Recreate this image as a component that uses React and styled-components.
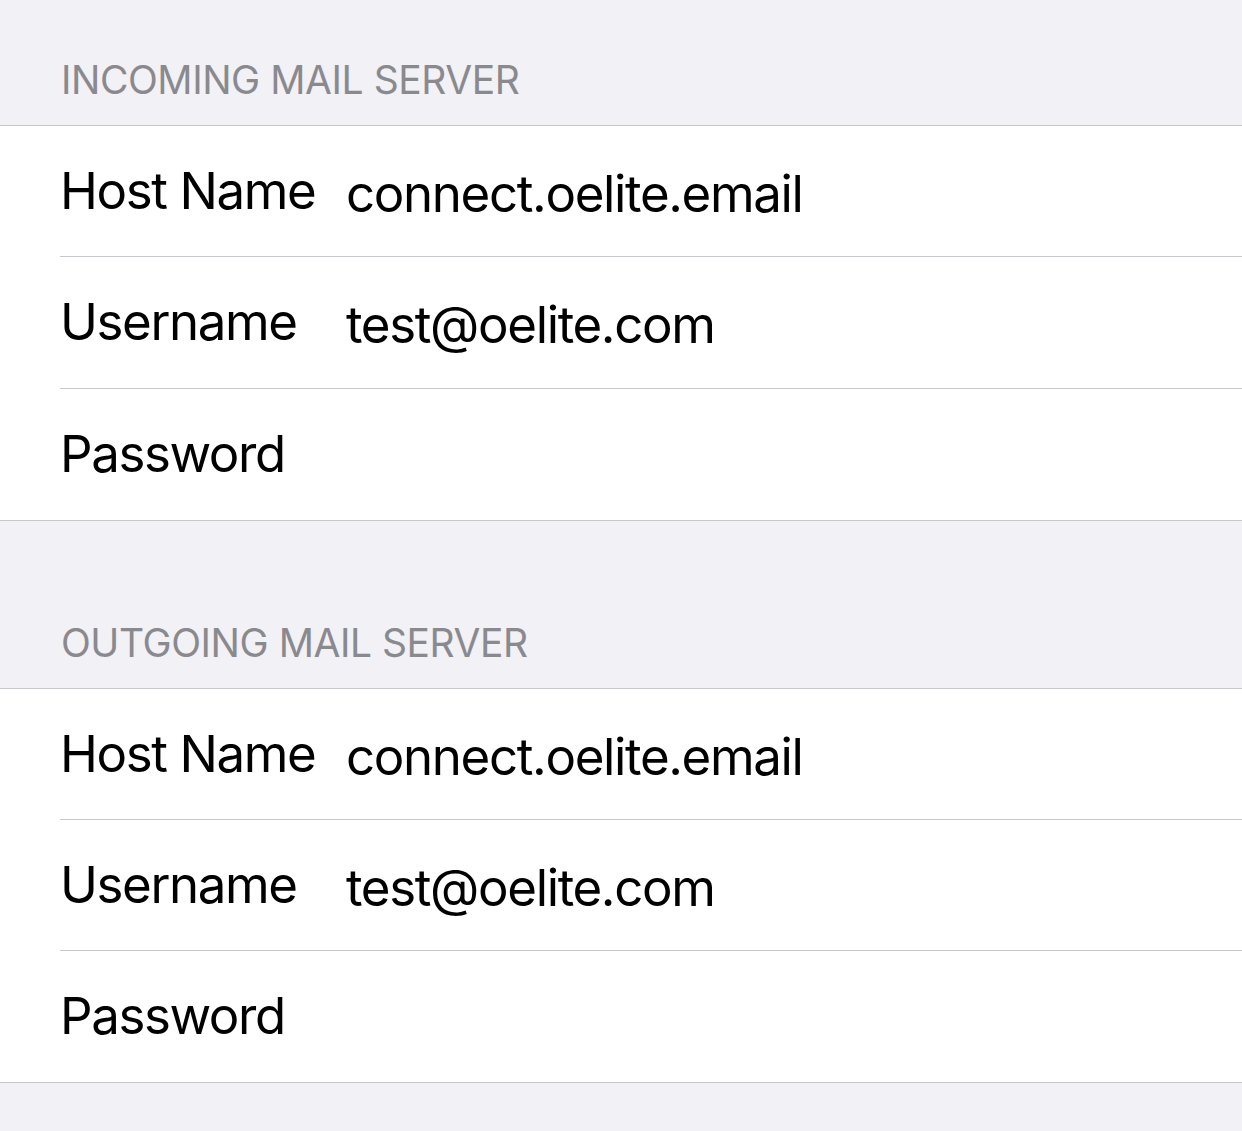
import React from "react";
import styled, { createGlobalStyle } from "styled-components";

const Global = createGlobalStyle`
  html, body { margin: 0; padding: 0; background: #f1f1f6; }
  body { font-family: Inter, "Noto Sans", sans-serif; -webkit-font-smoothing: antialiased; }
`;

const Page = styled.div`
  width: 1242px;
  min-height: 1131px;
  background: #f1f1f6;
  display: flex;
  flex-direction: column;
`;

const SectionHeader = styled.div`
  height: ${(p) => p.$height}px;
  box-sizing: border-box;
  display: flex;
  align-items: flex-end;
  padding: 0 0 22px 61px;
  font-size: 39px;
  line-height: 47px;
  color: #8a8a8e;
  letter-spacing: -0.45px;
`;

const Group = styled.div`
  background: #ffffff;
  border-top: 1px solid #c8c7cc;
  border-bottom: 1px solid #c8c7cc;
  padding-left: 60px;
`;

const Row = styled.div`
  height: ${(p) => p.$h}px;
  display: flex;
  align-items: center;
  border-top: ${(p) => (p.$first ? "none" : "1px solid #c8c7cc")};
`;

const Label = styled.div`
  width: 286px;
  font-size: 51px;
  line-height: 61px;
  color: #000;
  letter-spacing: -1.4px;
  margin-top: -2px;
`;

const Value = styled.div`
  font-size: 51px;
  line-height: 61px;
  color: #000;
  padding-top: 4px;
  letter-spacing: -1.35px;
`;

const rows = [
  { label: "Host Name", value: "connect.oelite.email" },
  { label: "Username", value: "test@oelite.com" },
  { label: "Password", value: "" },
];

function Section({ title, headerHeight, heights }) {
  return (
    <>
      <SectionHeader $height={headerHeight}>{title}</SectionHeader>
      <Group>
        {rows.map((r, i) => (
          <Row key={r.label} $first={i === 0} $h={heights[i]}>
            <Label>{r.label}</Label>
            <Value>{r.value}</Value>
          </Row>
        ))}
      </Group>
    </>
  );
}

export default function App() {
  return (
    <Page>
      <Global />
      <Section title="INCOMING MAIL SERVER" headerHeight={125} heights={[130, 131, 131]} />
      <Section title="OUTGOING MAIL SERVER" headerHeight={167} heights={[130, 130, 131]} />
    </Page>
  );
}
